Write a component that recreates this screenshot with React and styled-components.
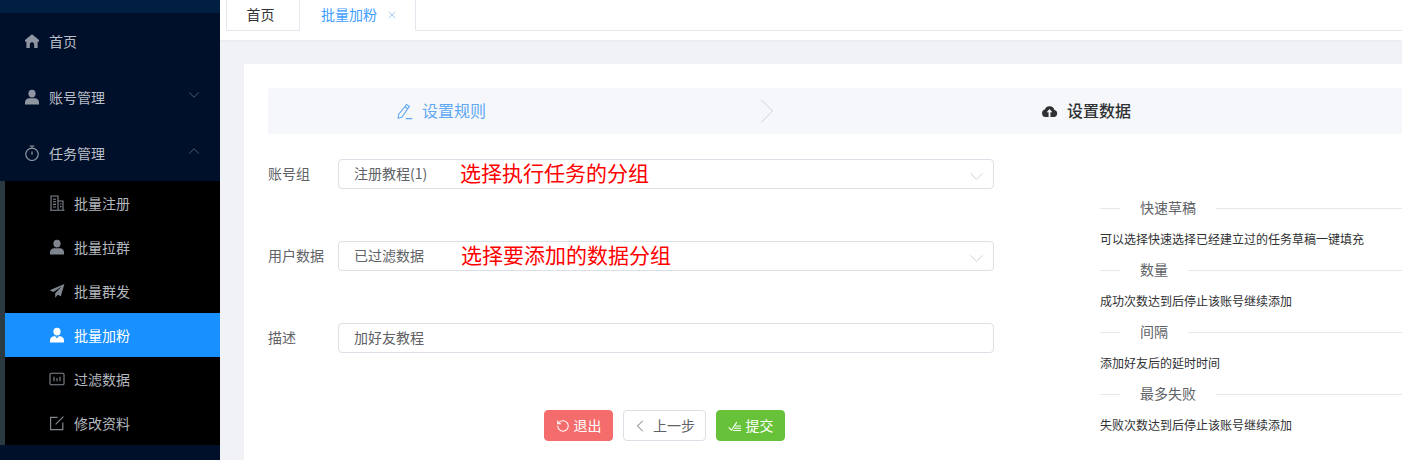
import React from "react";
import styled, { createGlobalStyle } from "styled-components";
import { RotateCcw, ChevronLeft, ChevronRight, ChevronDown, ChevronUp, X } from "lucide-react";

const GlobalStyle = createGlobalStyle`
  html, body { margin: 0; padding: 0; height: 100%; overflow: hidden; }
  body { font-family: "Noto Sans CJK SC", "Noto Sans", sans-serif; font-size: 14px; }
  * { box-sizing: border-box; }
`;

const Layout = styled.div`
  display: flex;
  width: 1402px;
  height: 460px;
  overflow: hidden;
  background: #f0f2f5;
`;

// sidebar
const Sidebar = styled.aside`
  width: 220px;
  flex: none;
  background: #00102a;
  display: flex;
  flex-direction: column;
`;

const Brand = styled.div`
  height: 13px;
  background: #001f42;
  flex: none;
`;

const MenuItem = styled.div`
  height: 56px;
  flex: none;
  display: flex;
  align-items: center;
  padding: 0 17px 0 24px;
  gap: 9px;
  color: #b9bec6;
  svg.lead { width: 16px; height: 16px; flex: none; }
  span { flex: 1; }
  svg.arrow { width: 18px; height: 18px; color: #6a7180; margin-top: -4px; }
`;

const SubMenu = styled.div`
  height: 264px;
  flex: none;
  background: #000;
  border-left: 5px solid #2b3a40;
  display: flex;
  flex-direction: column;
`;

const SubItem = styled.div`
  height: 44px;
  flex: none;
  display: flex;
  align-items: center;
  padding-left: 44px;
  gap: 9px;
  color: ${(p) => (p.$active ? "#fff" : "#b3b8bf")};
  background: ${(p) => (p.$active ? "#1890ff" : "transparent")};
  svg { width: 16px; height: 16px; flex: none; }
`;

// main column
const Main = styled.main`
  flex: 1;
  min-width: 0;
  display: flex;
  flex-direction: column;
`;

const TabBar = styled.div`
  height: 40px;
  flex: none;
  background: #fff;
  padding-left: 6px;
  display: flex;
  box-shadow: 0 1px 2px rgba(0, 0, 0, 0.04);
`;

const Tab = styled.div`
  height: 31px;
  display: flex;
  align-items: center;
  justify-content: center;
  gap: 9px;
  width: ${(p) => p.$width}px;
  padding: ${(p) => (p.$active ? "0 0 2px 4px" : "0 5px 2px 0")};
  color: ${(p) => (p.$active ? "#409eff" : "#303133")};
  border: 1px solid #e4e7ed;
  border-top: none;
  border-bottom: ${(p) => (p.$active ? "1px solid #fff" : "1px solid #e4e7ed")};
  border-left: ${(p) => (p.$active ? "none" : "1px solid #e4e7ed")};
  svg { width: 12px; height: 12px; color: #8cb8ee; margin-top: 2px; }
`;

const TabRest = styled.div`
  flex: 1;
  height: 31px;
  border-bottom: 1px solid #e4e7ed;
`;

const Content = styled.div`
  flex: 1;
  padding: 24px 0 0 24px;
`;

const Card = styled.section`
  background: #fff;
  height: 100%;
  padding: 24px 0 0 24px;
`;

const Steps = styled.div`
  height: 46px;
  background: #f5f7fa;
  border-radius: 3px 0 0 3px;
  display: flex;
  align-items: center;
`;

const Step = styled.div`
  display: flex;
  align-items: center;
  gap: 9px;
  font-size: 16px;
  padding-bottom: 2px;
  color: ${(p) => (p.$active ? "#303133" : "#5fa8f5")};
  font-weight: ${(p) => (p.$active ? 500 : 400)};
  margin-left: ${(p) => p.$left}px;
  svg { width: 17px; height: 17px; flex: none; margin-top: 2px; }
`;

const StepSep = styled(ChevronRight)`
  width: 44px;
  height: 44px;
  margin-left: 259px;
  color: #c8ccd3;
  stroke-width: 0.5;
  flex: none;
`;

const Body = styled.div`
  display: flex;
  gap: 106px;
`;

const FormCol = styled.div`
  width: 726px;
  flex: none;
  padding-top: 25px;
  display: flex;
  flex-direction: column;
  gap: 52px;
`;

const FormRow = styled.div`
  display: flex;
  align-items: center;
  height: 30px;
`;

const Label = styled.label`
  width: 70px;
  flex: none;
  padding-bottom: 2px;
  color: #606266;
`;

const Field = styled.div`
  position: relative;
  flex: 1;
  height: 30px;
  border: 1px solid #dcdfe6;
  border-radius: 4px;
  padding: 0 15px 2px;
  display: flex;
  align-items: center;
  justify-content: space-between;
  color: #606266;
  svg { width: 23px; height: 23px; color: #cdd0d6; margin-right: -10px; margin-top: 6px; }
`;

const Note = styled.span`
  position: absolute;
  left: ${(p) => p.$left}px;
  top: 50%;
  margin-top: -2px;
  transform: translateY(-50%);
  color: #f00;
  font-size: 21px;
  white-space: nowrap;
`;

const Actions = styled.div`
  display: flex;
  gap: 10px;
  margin-top: 5px;
  padding-left: 276px;
`;

const Button = styled.button`
  height: 31px;
  width: ${(p) => p.$width}px;
  font: inherit;
  font-size: 14px;
  padding: 0 ${(p) => p.$shift || 0}px 2px 0;
  border-radius: 4px;
  display: flex;
  align-items: center;
  justify-content: center;
  gap: ${(p) => p.$gap ?? 4}px;
  color: ${(p) => p.$color || "#fff"};
  background: ${(p) => p.$bg};
  border: 1px solid ${(p) => p.$line || p.$bg};
  svg { width: ${(p) => p.$icon || 14}px; height: ${(p) => p.$icon || 14}px; flex: none; margin-top: 2px; }
`;

const HelpCol = styled.div`
  flex: 1;
  min-width: 0;
  padding-top: 64px;
`;

const HelpTitle = styled.div`
  height: 20px;
  display: flex;
  align-items: center;
  color: #606266;
  span { position: relative; top: -1px; }
  &::before, &::after {
    content: "";
    height: 1px;
    background: #e6e8ee;
  }
  &::before { width: 20px; margin-right: 20px; }
  &::after { flex: 1; margin-left: 20px; }
`;

const HelpText = styled.p`
  margin: 12px 0;
  height: 18px;
  line-height: 18px;
  font-size: 12px;
  color: #303133;
`;

// icons
const HomeIcon = () => (
  <svg className="lead" viewBox="0 0 16 16" fill="#8f96a1">
    <path d="M8 1.2 15 7v1.3c0 .3-.2.5-.5.5H13.6V15h-3.4v-3.6a2.2 2.2 0 0 0-4.4 0V15H2.4V8.8h-.9c-.3 0-.5-.2-.5-.5V7z" />
  </svg>
);

const UserIcon = ({ color = "#8f96a1", collar }) => (
  <svg className="lead" viewBox="0 0 16 16" fill={color}>
    <ellipse cx="8" cy="4.6" rx="3.6" ry="3.9" />
    <path d="M1 15.6v-2.4c0-2.3 2-3.7 4-3.9h6c2 .2 4 1.6 4 3.9v2.4z" />
    {collar && <path d="M6.2 9.3 8 11.6l1.8-2.3z" fill="#1890ff" />}
  </svg>
);

const TimerIcon = () => (
  <svg className="lead" viewBox="0 0 16 16" fill="none" stroke="#8f96a1" strokeWidth="1.2">
    <circle cx="8" cy="9.3" r="6.2" />
    <path d="M5.6 1h4.8M8 1v2M8 6.5v3.2" />
  </svg>
);

const BuildingIcon = () => (
  <svg viewBox="0 0 16 16" fill="none" stroke="#80868f" strokeWidth="1.1">
    <path d="M1 15.2h14.5M2 15V1h7v14M9 6h5v9M4 4.2h3M4 6.8h3M4 9.4h3M4 12h3M11 9h1.5M11 11.6h1.5" />
  </svg>
);

const PlaneIcon = () => (
  <svg viewBox="0 0 16 16" fill="#80868f">
    <path d="M15.4 1 .6 7.3l4 1.8L12.6 3.6 6.2 10.2v4.6l2.6-3 3 1.4z" />
  </svg>
);

const DataIcon = () => (
  <svg viewBox="0 0 16 16" fill="none" stroke="#80868f" strokeWidth="1.1">
    <rect x="1" y="2.2" width="14" height="11.6" rx="1.4" />
    <path d="M5 5.8v4.4M8 7v3.2M11 5.8v4.4" />
  </svg>
);

const EditIcon = () => (
  <svg viewBox="0 0 16 16" fill="none" stroke="#80868f" strokeWidth="1.2">
    <path d="M8.5 2.4H1.6v12.2h12.2V7.6M6.6 9.4 14.4 1.6" />
  </svg>
);

const PenIcon = () => (
  <svg viewBox="0 0 17 17" fill="none" stroke="#5fa8f5" strokeWidth="1.1">
    <path d="M10.6 1.4 13.4 3.4 6 14 2.2 15.2 2.6 11.4zM9 3.8l2.8 2M9.8 15.6h6.4" />
  </svg>
);

const CloudIcon = () => (
  <svg viewBox="0 0 17 17">
    <path fill="#303133" d="M13.4 7.1a5 5 0 0 0-9.6-.5A3.8 3.8 0 0 0 4.2 14h8.8a3.5 3.5 0 0 0 .4-6.9z" />
    <path fill="#f5f7fa" d="M8.5 6 5.7 9.2h1.9V14h1.8V9.2h1.9z" />
  </svg>
);

const FinishedIcon = () => (
  <svg viewBox="0 0 16 16" fill="none" stroke="#fff" strokeWidth="1.2">
    <path d="M.8 9.6 4 12.8 10 3.6M8.4 8h6.4M7 10.6h7.8M5.8 13.2h9" />
  </svg>
);

const subMenu = [
  { name: "批量注册", icon: <BuildingIcon /> },
  { name: "批量拉群", icon: <UserIcon color="#80868f" /> },
  { name: "批量群发", icon: <PlaneIcon /> },
  { name: "批量加粉", icon: <UserIcon color="#fff" collar />, active: true },
  { name: "过滤数据", icon: <DataIcon /> },
  { name: "修改资料", icon: <EditIcon /> },
];

const help = [
  { title: "快速草稿", text: "可以选择快速选择已经建立过的任务草稿一键填充" },
  { title: "数量", text: "成功次数达到后停止该账号继续添加" },
  { title: "间隔", text: "添加好友后的延时时间" },
  { title: "最多失败", text: "失败次数达到后停止该账号继续添加" },
];

export default function App() {
  return (
    <Layout>
      <GlobalStyle />
      <Sidebar>
        <Brand />
        <MenuItem>
          <HomeIcon />
          <span>首页</span>
        </MenuItem>
        <MenuItem>
          <UserIcon />
          <span>账号管理</span>
          <ChevronDown className="arrow" strokeWidth={1} />
        </MenuItem>
        <MenuItem>
          <TimerIcon />
          <span>任务管理</span>
          <ChevronUp className="arrow" strokeWidth={1} />
        </MenuItem>
        <SubMenu>
          {subMenu.map((item) => (
            <SubItem key={item.name} $active={item.active}>
              {item.icon}
              {item.name}
            </SubItem>
          ))}
        </SubMenu>
      </Sidebar>

      <Main>
        <TabBar>
          <Tab $width={74}>首页</Tab>
          <Tab $width={116} $active>
            批量加粉
            <X strokeWidth={1.5} />
          </Tab>
          <TabRest />
        </TabBar>

        <Content>
          <Card>
            <Steps>
              <Step $left={128}>
                <PenIcon />
                设置规则
              </Step>
              <StepSep />
              <Step $left={252} $active>
                <CloudIcon />
                设置数据
              </Step>
            </Steps>

            <Body>
              <FormCol>
                <FormRow>
                  <Label>账号组</Label>
                  <Field>
                    注册教程(1)
                    <Note $left={121}>选择执行任务的分组</Note>
                    <ChevronDown strokeWidth={1} />
                  </Field>
                </FormRow>
                <FormRow>
                  <Label>用户数据</Label>
                  <Field>
                    已过滤数据
                    <Note $left={122}>选择要添加的数据分组</Note>
                    <ChevronDown strokeWidth={1} />
                  </Field>
                </FormRow>
                <FormRow>
                  <Label>描述</Label>
                  <Field>加好友教程</Field>
                </FormRow>
                <Actions>
                  <Button $width={69} $bg="#f56c6c">
                    <RotateCcw strokeWidth={1.8} />
                    退出
                  </Button>
                  <Button
                    $width={83}
                    $bg="#fff"
                    $line="#dcdfe6"
                    $color="#606266"
                    $gap={3}
                    $shift={4}
                    $icon={20}
                  >
                    <ChevronLeft strokeWidth={1.1} />
                    上一步
                  </Button>
                  <Button $width={69} $bg="#67c23a">
                    <FinishedIcon />
                    提交
                  </Button>
                </Actions>
              </FormCol>

              <HelpCol>
                {help.map((item) => (
                  <div key={item.title}>
                    <HelpTitle>
                      <span>{item.title}</span>
                    </HelpTitle>
                    <HelpText>{item.text}</HelpText>
                  </div>
                ))}
              </HelpCol>
            </Body>
          </Card>
        </Content>
      </Main>
    </Layout>
  );
}
